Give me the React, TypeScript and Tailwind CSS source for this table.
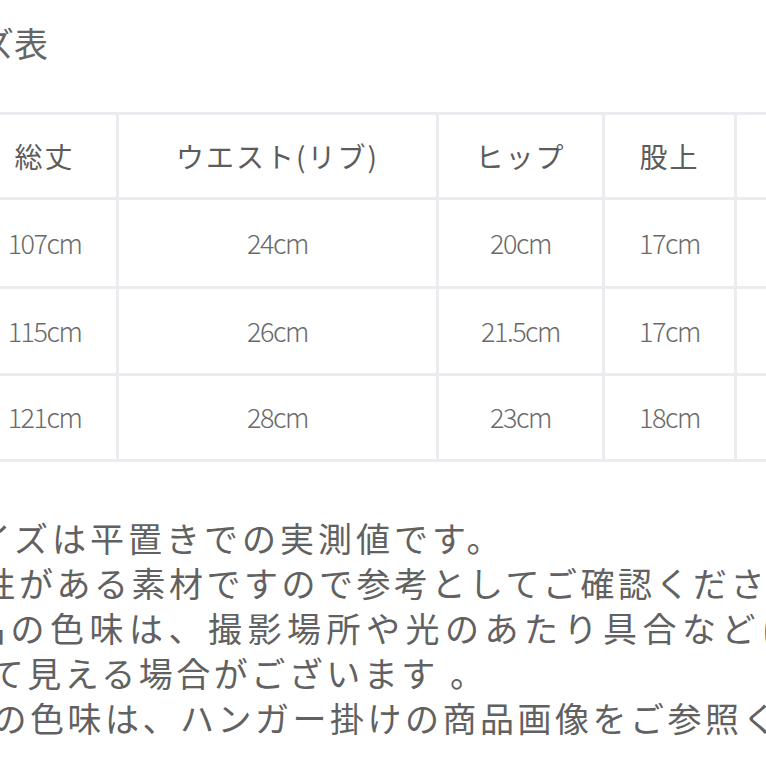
import React from "react";

const headers = ["総丈", "ウエスト(リブ)", "ヒップ", "股上", "股下"];

const rows = [
    ["107cm", "24cm", "20cm", "17cm", "45cm"],
    ["115cm", "26cm", "21.5cm", "17cm", "50cm"],
    ["121cm", "28cm", "23cm", "18cm", "54cm"],
];

// each line is cut by the left edge at a slightly different place, as in the photo
const notes = [
    { text: "※サイズは平置きでの実測値です。", cls: "-ml-[99px] tracking-[4px]" },
    { text: "※伸縮性がある素材ですので参考としてご確認ください。", cls: "-ml-[131px] tracking-[3.5px]" },
    { text: "※商品の色味は、撮影場所や光のあたり具合などにより、", cls: "-ml-[108px] tracking-[5.5px]" },
    { text: "異なって見える場合がございます 。", cls: "-ml-[121px] tracking-[3.5px]" },
    { text: "※実物の色味は、ハンガー掛けの商品画像をご参照ください。", cls: "-ml-[120px] tracking-[3.5px]" },
];

export default function App() {
    return (
        <div className="h-[766px] w-[766px] overflow-hidden bg-white text-[#666666] font-['Noto_Sans_CJK_JP','Noto_Sans',sans-serif]">
            {/* title, cut off on the left like the photo */}
            <div className="pt-[21px] -ml-[87px] text-[34px] leading-[44px] whitespace-nowrap">
                サイズ表
            </div>

            <div className="mt-[47px] -ml-[30px] w-max grid grid-cols-[143px_317px_163px_129px_170px] grid-rows-[82px_86px_84px_83px] gap-[3px] p-[3px] bg-[#ebebf0]">
                {headers.map((h) => (
                    <div
                        key={h}
                        className="flex items-center justify-center bg-white text-[28px] tracking-[2px] text-[#5c5c5c] whitespace-nowrap"
                    >
                        {h}
                    </div>
                ))}
                {rows.map((row, i) =>
                    row.map((v, j) => (
                        <div
                            key={`${i}-${j}`}
                            className="flex items-center justify-center bg-white text-[27px] font-light tracking-[-1.5px] text-[#6a6a6a]"
                        >
                            {v}
                        </div>
                    ))
                )}
            </div>

            <div className="mt-[53px] text-[34px] leading-[45px] text-[#616161]">
                {notes.map((n) => (
                    <div key={n.text} className={`${n.cls} whitespace-nowrap`}>
                        {n.text}
                    </div>
                ))}
            </div>
        </div>
    );
}
